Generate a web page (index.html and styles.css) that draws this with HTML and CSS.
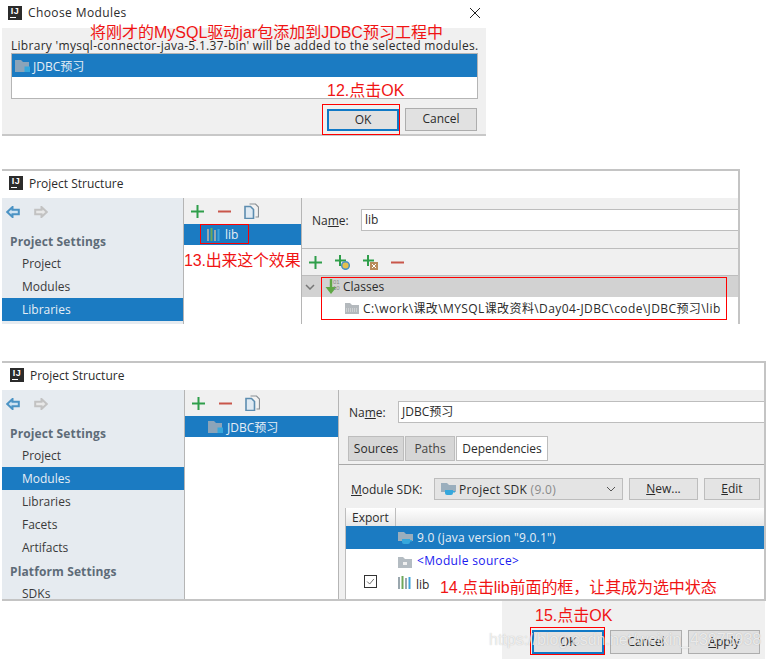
FILE: index.html
```html
<!DOCTYPE html>
<html lang="zh">
<head>
<meta charset="utf-8">
<title>Project Structure</title>
<link rel="stylesheet" href="styles.css">
</head>
<body>
<svg class="defs" aria-hidden="true">
  <symbol id="i-back" viewBox="0 0 14 12"><path d="M1.2 6 6.5 1v2.8h6.3v4.4H6.5V11z" fill="#cfe3f2" stroke="#4b93c4" stroke-width="2"/></symbol>
  <symbol id="i-fwd" viewBox="0 0 14 12"><path d="M12.8 6 7.5 1v2.8H1.2v4.4h6.3V11z" fill="#e8e8e8" stroke="#c2c2c2" stroke-width="2"/></symbol>
  <symbol id="i-plus" viewBox="0 0 13 13"><path d="M6.500 0v13M0 6.500h13" stroke="#2f9e4a" stroke-width="2"/></symbol>
  <symbol id="i-minus" viewBox="0 0 13 13"><path d="M0 6.500h13" stroke="#c9564a" stroke-width="2"/></symbol>
  <symbol id="i-copy" viewBox="0 0 15 16"><path d="M5.500 1h6l3 3v10h-3" fill="#f2f2f2" stroke="#8a8f94" stroke-width="1.2"/><path d="M1 3.500h5.500l3 3V15.500H1z" fill="#dfeaf3" stroke="#5c8db0" stroke-width="1.6"/></symbol>
  <symbol id="i-folder" viewBox="0 0 15 12"><path d="M0 0h6l2 2h6v10H0z" fill="#8ba4b9"/><path d="M9.500 6.500h5.500v5.500H9.500z" fill="#35a7dc"/></symbol>
  <symbol id="i-sdk" viewBox="0 0 15 12"><path d="M0 0h6l2 2h7v7H0z" fill="#9aaebd"/><path d="M4 7h8v3q0 2-2 2H6q-2 0-2-2z" fill="#35a7dc"/><path d="M12 8h2v1.500h-2" fill="#35a7dc"/></symbol>
  <symbol id="i-src" viewBox="0 0 14 11"><path d="M0 0h5l2 2h7v9H0z" fill="#b4bcc2"/><path d="M5 5h4v3H5z" fill="#f0f0f0"/></symbol>
  <symbol id="i-jar" viewBox="0 0 14 11"><path d="M0 0h5l2 2h7v9H0z" fill="#b4b9bd"/><path d="M1 6h12M1 8h12" stroke="#e8e8e8" stroke-dasharray="1 1"/></symbol>
  <symbol id="i-lib" viewBox="0 0 14 13"><path d="M1 1v12" stroke="#9aa7ae" stroke-width="2"/><path d="M4.500 0v13" stroke="#6fa85a" stroke-width="2"/><path d="M8 2v11" stroke="#9aa7ae" stroke-width="2"/><path d="M11.500 1v12" stroke="#41a4d8" stroke-width="2"/></symbol>
  <symbol id="i-plusdot" viewBox="0 0 15 15"><path d="M5 0v11M0 5.500h11" stroke="#2f9e4a" stroke-width="2"/><circle cx="10.500" cy="10.500" r="3.800" fill="#e5c04f" stroke="#4a90c4" stroke-width="1.500"/></symbol>
  <symbol id="i-plusbox" viewBox="0 0 15 15"><path d="M5 0v11M0 5.500h11" stroke="#2f9e4a" stroke-width="2"/><path d="M7 7h8v8H7z" fill="#b98a5a"/><path d="M9 9l4 4M13 9l-4 4" stroke="#fff"/></symbol>
  <symbol id="i-classes" viewBox="0 0 12 15"><path d="M6 0v10" stroke="#5fa845" stroke-width="2.400"/><path d="M0.500 8 6 15l5.500-7z" fill="#5fa845"/></symbol>
</svg>

<main class="page">
  <section class="win win-modules">
    <header class="titlebar">
      <span class="ij">IJ</span><span class="title title-wide">Choose Modules</span>
      <svg class="close" viewBox="0 0 10 10" aria-hidden="true"><path d="M0 0l10 10M10 0L0 10" stroke="#222" stroke-width="1"/></svg>
    </header>
    <div class="modules-body">
      <p class="modules-msg">Library 'mysql-connector-java-5.1.37-bin' will be added to the selected modules.</p>
      <div class="modules-list">
        <div class="row row-sel modules-row"><svg class="ic15"><use href="#i-folder"/></svg><span>JDBC预习</span></div>
      </div>
      <div class="modules-actions">
        <button class="btn btn-default btn-ok1">OK</button>
        <button class="btn btn-cancel1">Cancel</button>
      </div>
    </div>
    <p class="note note-1">将刚才的MySQL驱动jar包添加到JDBC预习工程中</p>
    <p class="note note-12">12.点击OK</p>
    <div class="mark mark-ok1"></div>
  </section>

  <section class="win win-lib">
    <header class="titlebar titlebar-ps">
      <span class="ij">IJ</span><span class="title">Project Structure</span>
    </header>
    <div class="ps-body ps-body-lib">
      <nav class="side">
        <div class="side-tools"><svg class="nav-ic"><use href="#i-back"/></svg><svg class="nav-ic"><use href="#i-fwd"/></svg></div>
        <div class="side-head">Project Settings</div>
        <div class="side-item">Project</div>
        <div class="side-item">Modules</div>
        <div class="side-item side-sel">Libraries</div>
      </nav>
      <div class="mid">
        <div class="mid-tools"><svg class="ic13"><use href="#i-plus"/></svg><svg class="ic13"><use href="#i-minus"/></svg><svg class="ic-copy"><use href="#i-copy"/></svg></div>
        <div class="row row-sel mid-row"><svg class="ic-lib"><use href="#i-lib"/></svg><span>lib</span></div>
      </div>
      <div class="lib-detail">
        <div class="name-row lib-name"><label class="lbl">Na<u>m</u>e:</label><div class="input">lib</div></div>
        <div class="lib-tools">
          <svg class="ic13"><use href="#i-plus"/></svg>
          <svg class="ic-add"><use href="#i-plusdot"/></svg>
          <svg class="ic-add"><use href="#i-plusbox"/></svg>
          <svg class="ic13"><use href="#i-minus"/></svg>
        </div>
        <div class="classes-head">
          <svg class="chev" viewBox="0 0 10 6" aria-hidden="true"><path d="M1 1l4 4 4-4" fill="none" stroke="#777" stroke-width="1.500"/></svg>
          <svg class="ic-classes"><use href="#i-classes"/></svg><span class="bits">01<br>10</span>
          <span>Classes</span>
        </div>
        <div class="classes-path"><svg class="ic-jar"><use href="#i-jar"/></svg><span>C:\work\课改\MYSQL课改资料\Day04-JDBC\code\JDBC预习\lib</span></div>
      </div>
    </div>
    <p class="note note-13">13.出来这个效果</p>
    <div class="mark mark-lib"></div>
    <div class="mark mark-classes"></div>
  </section>

  <section class="win win-mod">
    <header class="titlebar titlebar-ps">
      <span class="ij">IJ</span><span class="title">Project Structure</span>
    </header>
    <div class="ps-body ps-body-mod">
      <nav class="side">
        <div class="side-tools"><svg class="nav-ic"><use href="#i-back"/></svg><svg class="nav-ic"><use href="#i-fwd"/></svg></div>
        <div class="side-head">Project Settings</div>
        <div class="side-item">Project</div>
        <div class="side-item side-sel">Modules</div>
        <div class="side-item">Libraries</div>
        <div class="side-item">Facets</div>
        <div class="side-item">Artifacts</div>
        <div class="side-head">Platform Settings</div>
        <div class="side-item">SDKs</div>
      </nav>
      <div class="mid">
        <div class="mid-tools"><svg class="ic13"><use href="#i-plus"/></svg><svg class="ic13"><use href="#i-minus"/></svg><svg class="ic-copy"><use href="#i-copy"/></svg></div>
        <div class="row row-sel mid-row"><svg class="ic15"><use href="#i-folder"/></svg><span>JDBC预习</span></div>
      </div>
      <div class="mod-detail">
        <div class="name-row mod-name"><label class="lbl">Na<u>m</u>e:</label><div class="input">JDBC预习</div></div>
        <div class="tabs">
          <span class="tab tab-sources">Sources</span><span class="tab tab-paths">Paths</span><span class="tab tab-on">Dependencies</span>
        </div>
        <div class="sdk-row">
          <label class="lbl sdk-lbl"><u>M</u>odule SDK:</label>
          <div class="combo"><svg class="ic15"><use href="#i-sdk"/></svg><span>Project SDK <em>(9.0)</em></span>
            <svg class="combo-arrow" viewBox="0 0 10 6" aria-hidden="true"><path d="M1 1l4 4 4-4" fill="none" stroke="#555"/></svg></div>
          <button class="btn btn-new"><u>N</u>ew...</button>
          <button class="btn btn-edit"><u>E</u>dit</button>
        </div>
        <div class="table">
          <div class="thead"><span class="th">Export</span></div>
          <div class="row row-sel dep dep-sdk"><svg class="ic15"><use href="#i-sdk"/></svg><span class="dep-text">9.0 (java version "9.0.1")</span></div>
          <div class="dep dep-src"><svg class="ic-jar"><use href="#i-src"/></svg><span class="src-text">&lt;Module source&gt;</span></div>
          <div class="dep dep-lib">
            <span class="check"><svg viewBox="0 0 13 13" aria-hidden="true"><path d="M2.500 6.500l3 3 5-6" fill="none" stroke="#555"/></svg></span>
            <svg class="ic-lib"><use href="#i-lib"/></svg><span>lib</span>
          </div>
        </div>
      </div>
    </div>
    <div class="footer">
      <button class="btn btn-default btn-ok3">OK</button>
      <button class="btn btn-foot">Cancel</button>
      <button class="btn btn-foot"><u>A</u>pply</button>
    </div>
    <p class="note note-14">14.点击lib前面的框，让其成为选中状态</p>
    <p class="note note-15">15.点击OK</p>
    <div class="mark mark-ok3"></div>
    <p class="watermark">https://blog.csdn.net/weixin_43875938</p>
  </section>
</main>
</body>
</html>
```

FILE: styles.css
```css
* { box-sizing: border-box; }
html, body { margin: 0; padding: 0; background: #fff; }
body {
  width: 770px;
  height: 659px;
  overflow: hidden;
  font-family: "Open Sans", "Noto Sans CJK SC", sans-serif;
  font-size: 12px;
  color: #2b2b2b;
}
.defs { position: absolute; width: 0; height: 0; }
.page { display: flex; flex-direction: column; padding-left: 2px; }
p { margin: 0; }
svg { display: block; flex: none; }
u { text-underline-offset: 1px; }

.win { position: relative; }
.win-modules { width: 484px; height: 136px; }
.win-lib { width: 738px; height: 157px; margin-top: 33px; }
.win-mod { width: 764px; margin-top: 35px; }

.titlebar { display: flex; align-items: center; height: 28px; padding: 0 0 3px 6px; background: #fff; }
.titlebar-ps { height: 29px; border-top: 2px solid #c4c4c4; border-right: 2px solid #c4c4c4; padding: 0 0 3px 7px; }
.win-mod .titlebar-ps { padding-left: 8px; }
.ij {
  position: relative; width: 14px; height: 14px; margin-right: 6px; background: #2b2b2b; color: #fff;
  font: bold 9px/10px "Liberation Sans", sans-serif; text-align: center; letter-spacing: 0.5px;
}
.ij::after { content: ""; position: absolute; left: 2px; bottom: 2px; width: 6px; height: 1px; background: #fff; }
.title-wide { letter-spacing: 0.4px; }
.close { position: absolute; left: 468px; top: 8px; width: 10px; height: 10px; }

.modules-body { height: 108px; background: #f0f0f0; border-bottom: 2px solid #c8c8c8; padding: 8px 8px 0 9px; display: flex; flex-direction: column; }
.modules-msg { white-space: nowrap; line-height: 17px; padding-top: 1px; height: 17px; letter-spacing: 0.29px; }
.modules-list { height: 46px; border: 1px solid #b5b5b5; background: #fff; }
.row { display: flex; align-items: center; }
.row-sel { background: #1b7bc2; color: #e6eef5; }
.modules-row { height: 23px; padding-left: 3px; gap: 3px; }
.modules-actions { display: flex; gap: 6px; justify-content: flex-end; margin-top: 9px; padding-right: 1px; align-items: center; }

.btn {
  font: 12px "Open Sans", "Noto Sans CJK SC", sans-serif;
  color: #2b2b2b; background: #e1e1e1; border: 1px solid #adadad; padding: 0 0 2px;
  height: 23px;
}
.btn-default { border: 2px solid #0f78c6; }
.btn-ok1 { width: 72px; height: 22px; }
.btn-cancel1 { width: 72px; }

.ps-body { display: grid; }
.ps-body-lib { grid-template-columns: 182px 118px 1fr; height: 126px; border-bottom: 2px solid #c4c4c4; border-right: 2px solid #c4c4c4; }
.ps-body-mod { grid-template-columns: 183px 154px 1fr; height: 211px; border-bottom: 2px solid #c4c4c4; border-right: 2px solid #c4c4c4; overflow: hidden; }
.side { background: #e6ebf0; border-right: 1px solid #b5b5b5; overflow: hidden; min-height: 0; }
.side-tools { display: flex; gap: 14px; height: 31px; padding: 8px 0 0 4px; }
.nav-ic { width: 14px; height: 12px; }
.side-head, .side-item { height: 23px; line-height: 23px; }
.side-head { padding-left: 8px; font-weight: 700; color: #5e6b78; line-height: 25px; letter-spacing: 0.12px; }
.side-item { padding-left: 20px; color: #3a3a3a; }
.side-sel { background: #1b7bc2; color: #e6eef5; }

.mid { background: #fff; border-right: 1px solid #b5b5b5; }
.mid-tools { height: 26px; background: #f0f0f0; display: flex; align-items: center; gap: 14px; padding-left: 7px; }
.ic13 { width: 13px; height: 13px; }
.ic15 { width: 15px; height: 12px; }
.ic-add { width: 15px; height: 15px; }
.ic-copy { width: 15px; height: 16px; margin-left: -1px; }
.mid-row { height: 21px; gap: 4px; padding-left: 23px; }
.ic-lib { width: 14px; height: 13px; }

.lib-detail { background: #f0f0f0; min-width: 0; }
.name-row { display: flex; }
.lbl { white-space: nowrap; }
.lib-name { height: 51px; padding: 11px 0 0 10px; border-bottom: 1px solid #bdbdbd; }
.lib-name .lbl { line-height: 24px; width: 49px; }
.input { flex: 1; height: 22px; background: #fff; border: 1px solid #bdbdbd; border-right: 0; line-height: 20px; padding-left: 3px; }
.lib-tools { height: 27px; display: flex; align-items: center; gap: 13px; padding-left: 7px; border-bottom: 1px solid #bdbdbd; }
.classes-head { height: 21px; background: #d2d2d2; display: flex; align-items: center; padding-left: 3px; }
.chev { width: 10px; height: 6px; margin-right: 10px; }
.ic-classes { width: 12px; height: 15px; }
.bits { font-size: 6px; line-height: 6px; color: #8a8a8a; width: 11px; margin: -3px 0 0 -4px; font-family: "Liberation Sans", sans-serif; }
.classes-head .bits + span { margin-left: -1px; }
.classes-path { height: 27px; background: #fff; display: flex; align-items: flex-start; gap: 4px; padding: 3px 0 0 43px; white-space: nowrap; letter-spacing: 0.4px; line-height: 17px; }
.ic-jar { width: 14px; height: 11px; margin-top: 3px; }

.mod-detail { background: #f0f0f0; min-width: 0; }
.mod-name { padding: 11px 0 0 10px; height: 46px; }
.mod-name .lbl { line-height: 24px; width: 49px; }
.tabs { display: flex; height: 29px; padding-left: 9px; border-bottom: 1px solid #a9a9a9; align-items: flex-start; }
.tab { height: 25px; line-height: 24px; text-align: center; background: #d6d6d6; border: 1px solid #bdbdbd; margin-right: 1px; }
.tab-sources { width: 56px; }
.tab-paths { width: 50px; color: #444; }
.tab-on { width: 92px; background: #fff; }
.sdk-row { display: flex; align-items: center; height: 22px; margin-top: 13px; padding-left: 12px; }
.sdk-lbl { width: 83px; }
.combo { width: 189px; height: 22px; display: flex; align-items: center; gap: 3px; padding-left: 6px; background: #e4e4e4; border: 1px solid #bdbdbd; position: relative; letter-spacing: 0.3px; }
.combo em { font-style: normal; color: #8a8a8a; }
.combo-arrow { position: absolute; right: 6px; top: 7px; width: 10px; height: 6px; }
.btn-new { width: 69px; height: 22px; margin-left: 6px; background: #e4e4e4; border-color: #bdbdbd; }
.btn-edit { width: 56px; height: 22px; margin-left: 6px; background: #e4e4e4; border-color: #bdbdbd; }
.table { margin: 8px 0 0 6px; background: #fff; border-left: 1px solid #bdbdbd; }
.thead { height: 18px; background: linear-gradient(#fff, #e6e6e6); overflow: hidden; }
.th { display: block; height: 18px; line-height: 20px; padding-left: 6px; border-right: 1px solid #bdbdbd; width: 50px; }
.dep { display: flex; align-items: center; gap: 4px; padding-left: 52px; height: 23px; white-space: nowrap; }
.dep-text { letter-spacing: 0.22px; }
.dep-src { gap: 5px; }
.src-text { color: #1a1af0; letter-spacing: 0.35px; }
.dep-lib { height: 28px; position: relative; align-items: flex-start; padding-top: 4px; }
.check { position: absolute; left: 18px; top: 3px; width: 13px; height: 13px; background: #fff; border: 1px solid #333; }

.footer { width: 263px; height: 58px; margin-left: auto; margin-right: 1px; background: #f0f0f0; display: flex; gap: 6px; padding: 29px 4px 0 30px; }
.btn-ok3 { width: 72px; height: 24px; }
.btn-foot { width: 72px; height: 24px; }

.note { position: absolute; color: #f01414; font: 16px/20px "Liberation Sans", "Noto Sans CJK SC", sans-serif; white-space: nowrap; }
.note-1 { left: 88px; top: 23px; }
.note-12 { left: 325px; top: 81px; }
.note-13 { left: 182px; top: 82px; letter-spacing: -0.2px; }
.note-14 { left: 438px; top: 217px; letter-spacing: -0.08px; }
.note-15 { left: 533px; top: 245px; }
.mark { position: absolute; border: 1px solid #f00; }
.mark-ok1 { left: 320px; top: 104px; width: 78px; height: 31px; }
.mark-lib { left: 198px; top: 55px; width: 49px; height: 20px; }
.mark-classes { left: 319px; top: 108px; width: 406px; height: 43px; }
.mark-ok3 { left: 528px; top: 266px; width: 75px; height: 28px; }
.watermark { position: absolute; left: 487px; top: 269px; color: rgba(255,255,255,0.72); text-shadow: 0 0 1px rgba(110,110,110,0.45); font: 16px/20px "Liberation Sans", sans-serif; white-space: nowrap; }
```
